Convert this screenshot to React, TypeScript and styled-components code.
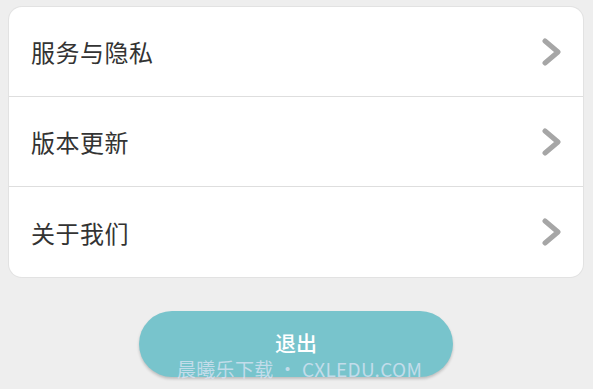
import React from 'react';
import styled, { createGlobalStyle } from 'styled-components';

const GlobalStyle = createGlobalStyle`
  html, body {
    margin: 0;
    padding: 0;
    background: #eeeeee;
    font-family: "Noto Sans CJK SC", "Noto Sans", sans-serif;
  }
`;

const items = ['服务与隐私', '版本更新', '关于我们'];

const Chevron: React.FC = () => (
  <svg width="22" height="28" viewBox="0 0 22 28">
    <path d="M4 3 L17 14 L4 25" fill="none" stroke="#a6a6a6" strokeWidth="5" strokeLinecap="round" strokeLinejoin="round" />
  </svg>
);

const App: React.FC = () => {
  return (
    <Page>
      <GlobalStyle />
      <Card>
        {items.map((label, i) => (
          <Row key={label} last={i === items.length - 1}>
            <Label>{label}</Label>
            <Chevron />
          </Row>
        ))}
      </Card>
      <ButtonWrap>
        <Logout>
          <span>退出</span>
          <Watermark>晨曦乐下载 • CXLEDU.COM</Watermark>
        </Logout>
      </ButtonWrap>
    </Page>
  );
};

const Page = styled.div`
  width: 593px;
  height: 389px;
  overflow: hidden;
  padding: 7px 10px 0 9px;
  box-sizing: border-box;
`;

const Card = styled.div`
  background: #ffffff;
  border-radius: 13px;
  box-shadow: 0 0 0 1px #e2e2e2;
  overflow: hidden;
`;

const Row = styled.div<{ last?: boolean }>`
  display: flex;
  justify-content: space-between;
  align-items: center;
  height: 90px;
  box-sizing: border-box;
  padding: 0 20px 0 22px;
  border-bottom: ${({ last }) => (last ? 'none' : '1px solid #dedede')};
`;

const Label = styled.div`
  font-size: 24px;
  color: #333333;
  letter-spacing: 0.5px;
`;

const ButtonWrap = styled.div`
  display: flex;
  justify-content: center;
  padding-top: 34px;
`;

const Logout = styled.div`
  position: relative;
  width: 314px;
  height: 66px;
  border-radius: 33px;
  background: #78c4cc;
  box-shadow: 0 2px 3px rgba(0, 0, 0, 0.2);
  display: flex;
  justify-content: center;
  align-items: center;
  color: #ffffff;
  font-size: 21px;
  line-height: 21px;
  font-weight: 500;
  padding-bottom: 4px;
  box-sizing: border-box;
`;

const Watermark = styled.div`
  position: absolute;
  left: 38px;
  top: 48px;
  font-size: 19px;
  font-weight: normal;
  letter-spacing: 0.3px;
  color: rgba(220, 228, 245, 0.75);
  white-space: nowrap;
  line-height: 19px;
`;

export default App;
